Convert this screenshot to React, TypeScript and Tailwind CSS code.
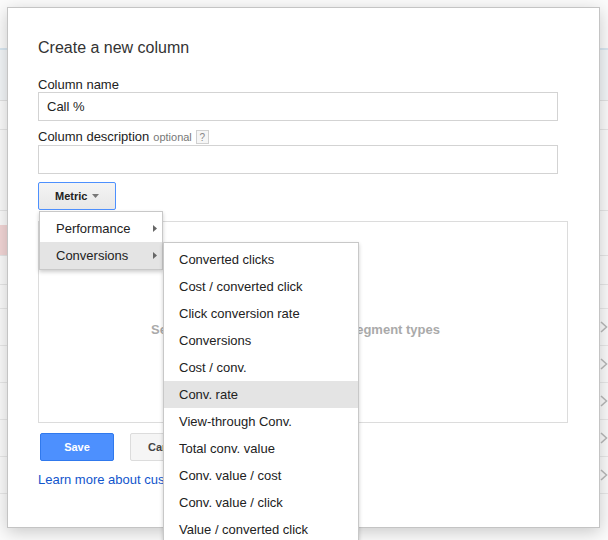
import React from 'react';

const FONT = "font-['Liberation_Sans',Arial,sans-serif]";

const SUB_ITEMS = [
  'Converted clicks',
  'Cost / converted click',
  'Click conversion rate',
  'Conversions',
  'Cost / conv.',
  'Conv. rate',
  'View-through Conv.',
  'Total conv. value',
  'Conv. value / cost',
  'Conv. value / click',
  'Value / converted click',
  'All conv.',
];

function Chevron() {
  return (
    <svg width="8" height="12" viewBox="0 0 8 12" fill="none">
      <path d="M1 1L6.5 6L1 11" stroke="#b9b9b9" strokeWidth="1.6" />
    </svg>
  );
}

function RightArrow() {
  return (
    <svg width="4" height="7" viewBox="0 0 4 7">
      <path d="M0 0L4 3.5L0 7Z" fill="#666" />
    </svg>
  );
}

// faded page behind the modal
function Backdrop() {
  const rows = [0, 1, 2, 3, 4, 5];
  return (
    <div className="flex flex-col w-full h-full bg-[#fbfbfb]">
      <div className="h-[48px]" />
      <div className="h-[52px] border-t-2 border-[#d9e7f1] bg-[#f3f6f8]" />
      <div className="h-[29px] border-t border-[#e2e2e2]" />
      <div className="h-[81px] border-t border-[#e6e6e6]" />
      <div className="h-[15px] border-t border-[#e6e6e6]" />
      <div className="h-[30px] flex">
        <div className="w-[20px] bg-[#f3d6d6]" />
      </div>
      <div className="h-[29px] border-t border-[#e6e6e6]" />
      <div className="h-[24px] border-t border-[#e6e6e6]" />
      {rows.map((r) => (
        <div key={r} className="h-[37px] border-t border-[#e8e8e8] flex items-center justify-end">
          {r < 5 && <Chevron />}
        </div>
      ))}
    </div>
  );
}

export default function App() {
  return (
    <div className={`relative w-[608px] h-[540px] overflow-hidden ${FONT}`}>
      <Backdrop />

      <div className="absolute left-[7px] top-[7px] w-[593px] h-[521px] bg-white border border-[#c4c4c4] shadow-[0_4px_16px_rgba(0,0,0,0.2)] pl-[30px] pt-[30px]">
        <h2 className="text-[16px] leading-[20px] text-[#333]">Create a new column</h2>

        <div className="mt-[20px] text-[13px] leading-[14px] text-[#222]">Column name</div>
        <div className="w-[520px] h-[29px] border border-[#d3d3d3] flex items-center pl-[8px] text-[13px] text-[#222]">
          Call %
        </div>

        <div className="mt-[9px] h-[14px] flex items-center text-[13px] text-[#222]">
          <span>Column description</span>
          <span className="ml-[4px] text-[11px] text-[#777]">optional</span>
          <span className="ml-[4px] w-[13px] h-[14px] border border-[#d0d0d0] bg-[#f6f6f6] flex items-center justify-center text-[10px] text-[#888]">
            ?
          </span>
        </div>
        <div className="mt-[1px] w-[520px] h-[29px] border border-[#d3d3d3]" />

        <div className="relative mt-[8px] w-[78px] h-[28px]">
          <div className="w-full h-full border border-[#4d90fe] rounded-[2px] bg-gradient-to-b from-[#f4f4f4] to-[#e8e8e8] flex items-center pl-[16px] gap-[5px] text-[11px] font-bold text-[#222]">
            Metric
            <svg width="7" height="4" viewBox="0 0 7 4">
              <path d="M0 0H7L3.5 4Z" fill="#777" />
            </svg>
          </div>

          <div className="absolute left-[1px] top-[29px] z-10 w-[124px] bg-white border border-[#c8c8c8] shadow-[0_2px_4px_rgba(0,0,0,0.2)] pt-[3px] text-[13px] text-[#222]">
            <div className="h-[27px] flex items-center justify-between pl-[16px] pr-[5px]">
              Performance
              <RightArrow />
            </div>
            <div className="h-[27px] flex items-center justify-between pl-[16px] pr-[5px] bg-[#e4e4e4]">
              Conversions
              <RightArrow />
            </div>

            <div className="absolute left-[123px] top-[30px] w-[196px] bg-white border border-[#c8c8c8] shadow-[0_2px_4px_rgba(0,0,0,0.2)] pt-[3px]">
              {SUB_ITEMS.map((item) => (
                <div
                  key={item}
                  className={`h-[27px] flex items-center pl-[15px] ${item === 'Conv. rate' ? 'bg-[#e4e4e4]' : ''}`}
                >
                  {item}
                </div>
              ))}
            </div>
          </div>
        </div>

        <div className="mt-[11px] w-[530px] h-[202px] border border-[#dcdcdc] pl-[112px] pt-[100px] text-[13px] leading-[16px] font-bold text-[#aaa]">
          Select metrics, dimensions and segment types
        </div>

        <div className="mt-[10px] pl-[2px] flex gap-[16px]">
          <button className="w-[74px] h-[28px] rounded-[2px] bg-[#4d90fe] border border-[#3079ed] text-white text-[11px] font-bold">
            Save
          </button>
          <button className="h-[28px] px-[17px] rounded-[2px] bg-[#f5f5f5] border border-[#dcdcdc] text-[#444] text-[11px] font-bold">
            Cancel
          </button>
        </div>

        <div className="mt-[11px] text-[13px] leading-[16px] text-[#1155cc]">Learn more about custom columns</div>
      </div>
    </div>
  );
}
